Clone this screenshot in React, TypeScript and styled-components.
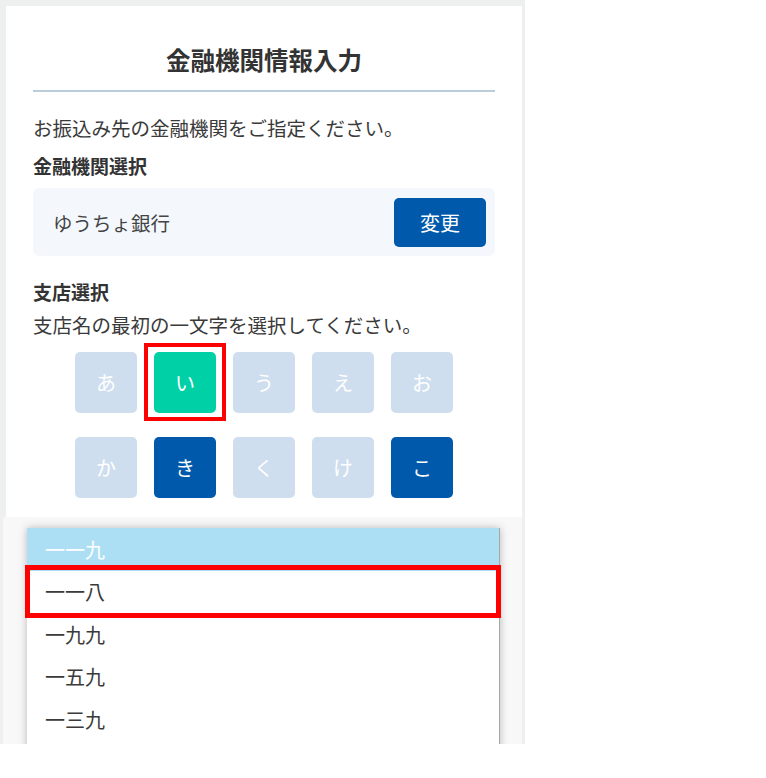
import React from "react";
import styled, { createGlobalStyle } from "styled-components";

const Global = createGlobalStyle`
  html, body { margin: 0; padding: 0; background: #ffffff; }
  body { font-family: "Noto Sans CJK JP", "Noto Sans", sans-serif; color: #333; }
  * { box-sizing: border-box; }
`;

const Frame = styled.div`
  width: 525px;
  height: 744px;
  overflow: hidden;
  background: #eef0f0;
  padding-top: 6px;
  display: flex;
  flex-direction: column;
`;

const Card = styled.section`
  margin-left: 6px;
  width: 516px;
  background: #ffffff;
  padding: 40px 27px 19px;
  display: flex;
  flex-direction: column;
`;

const Title = styled.h1`
  margin: 0;
  font-size: 24.5px;
  line-height: 28px;
  font-weight: 700;
  text-align: center;
  color: #333;
  padding-bottom: 16px;
  border-bottom: 2px solid #b9cddd;
  margin-bottom: 22px;
`;

const Text = styled.p<{ $mt?: number }>`
  margin: ${(p) => p.$mt ?? 0}px 0 0;
  font-size: 19.5px;
  line-height: 28px;
  color: #3a3a3a;
  white-space: nowrap;
`;

const Label = styled.h2<{ $mt?: number }>`
  margin: ${(p) => p.$mt ?? 0}px 0 0;
  font-size: 19px;
  line-height: 28px;
  font-weight: 700;
  color: #333;
`;

const BankBox = styled.div`
  margin-top: 8px;
  height: 68px;
  background: #f4f8fd;
  border-radius: 6px;
  display: flex;
  align-items: center;
  justify-content: space-between;
  padding: 0 9px 0 20px;
`;

const BankName = styled.span`
  font-size: 19.5px;
  color: #444;
`;

const ChangeButton = styled.button`
  width: 92px;
  height: 49px;
  border: none;
  border-radius: 5px;
  background: #0059ab;
  color: #fff;
  font-family: inherit;
  font-size: 20px;
  padding: 0;
`;

const KanaGrid = styled.div`
  margin: 13px auto 0;
  display: grid;
  grid-template-columns: repeat(5, 62px);
  grid-auto-rows: 61px;
  column-gap: 17px;
  row-gap: 24px;
`;

type KanaState = "disabled" | "selected" | "active";

const Kana = styled.button<{ $state: KanaState }>`
  position: relative;
  border: none;
  border-radius: 5px;
  padding: 0;
  font-family: inherit;
  font-size: 20px;
  color: #fff;
  background: ${(p) =>
    p.$state === "selected" ? "#00d0a6" : p.$state === "active" ? "#0059ab" : "#cedeee"};
`;

const KanaMark = styled.span`
  position: absolute;
  top: -9px;
  left: -10px;
  right: -10px;
  bottom: -8px;
  border: 4.5px solid #ff0000;
  pointer-events: none;
`;

const Lower = styled.div`
  margin-left: 3px;
  width: 519px;
  flex: 1;
  background: #f8f8f8;
  padding: 11px 0 0 24px;
`;

const ListBox = styled.ul`
  margin: 0;
  padding: 0;
  list-style: none;
  width: 473px;
  background: #fff;
  border-right: 1px solid #a8a8a8;
  box-shadow: 0 0 8px rgba(0, 0, 0, 0.25);
  height: 240px;
`;

const Option = styled.li<{ $hl?: boolean }>`
  position: relative;
  height: 42.5px;
  display: flex;
  align-items: center;
  padding-left: 18px;
  font-size: 20px;
  color: ${(p) => (p.$hl ? "#ffffff" : "#3a3a3a")};
  background: ${(p) => (p.$hl ? "#addff4" : "#ffffff")};
`;

const OptionMark = styled.span`
  position: absolute;
  z-index: 2;
  top: -6px;
  left: -2px;
  right: -2px;
  bottom: -5px;
  border: 5px solid #ff0000;
  pointer-events: none;
`;

const kana: { ch: string; state: KanaState }[] = [
  { ch: "あ", state: "disabled" },
  { ch: "い", state: "selected" },
  { ch: "う", state: "disabled" },
  { ch: "え", state: "disabled" },
  { ch: "お", state: "disabled" },
  { ch: "か", state: "disabled" },
  { ch: "き", state: "active" },
  { ch: "く", state: "disabled" },
  { ch: "け", state: "disabled" },
  { ch: "こ", state: "active" },
];

const options = ["一一九", "一一八", "一九九", "一五九", "一三九"];

export default function App() {
  return (
    <>
      <Global />
      <Frame>
        <Card>
          <Title>金融機関情報入力</Title>
          <Text>お振込み先の金融機関をご指定ください。</Text>
          <Label $mt={10}>金融機関選択</Label>
          <BankBox>
            <BankName>ゆうちょ銀行</BankName>
            <ChangeButton>変更</ChangeButton>
          </BankBox>
          <Label $mt={22}>支店選択</Label>
          <Text $mt={5}>支店名の最初の一文字を選択してください。</Text>
          <KanaGrid>
            {kana.map((k) => (
              <Kana key={k.ch} $state={k.state}>
                {k.ch}
                {k.state === "selected" && <KanaMark />}
              </Kana>
            ))}
          </KanaGrid>
        </Card>
        <Lower>
          <ListBox>
            {options.map((o, i) => (
              <Option key={o} $hl={i === 0}>
                {o}
                {i === 1 && <OptionMark />}
              </Option>
            ))}
          </ListBox>
        </Lower>
      </Frame>
    </>
  );
}
